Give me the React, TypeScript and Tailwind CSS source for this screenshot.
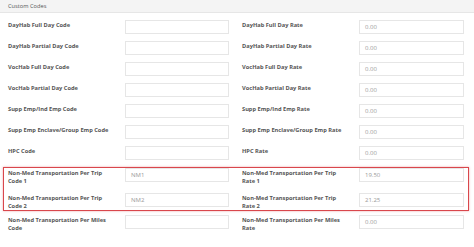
import React from "react";

type Row = { l: string; lv: string; r: string; rv: string; two?: boolean };

const rows: Row[] = [
  { l: "DayHab Full Day Code", lv: "", r: "DayHab Full Day Rate", rv: "0.00" },
  { l: "DayHab Partial Day Code", lv: "", r: "DayHab Partial Day Rate", rv: "0.00" },
  { l: "VocHab Full Day Code", lv: "", r: "VocHab Full Day Rate", rv: "0.00" },
  { l: "VocHab Partial Day Code", lv: "", r: "VocHab Partial Day Rate", rv: "0.00" },
  { l: "Supp Emp/Ind Emp Code", lv: "", r: "Supp Emp/Ind Emp Rate", rv: "0.00" },
  { l: "Supp Emp Enclave/Group Emp Code", lv: "", r: "Supp Emp Enclave/Group Emp Rate", rv: "0.00" },
  { l: "HPC Code", lv: "", r: "HPC Rate", rv: "0.00" },
];

const boxRows: Row[] = [
  { l: "Non-Med Transportation Per Trip Code 1", lv: "NM1", r: "Non-Med Transportation Per Trip Rate 1", rv: "19.50", two: true },
  { l: "Non-Med Transportation Per Trip Code 2", lv: "NM2", r: "Non-Med Transportation Per Trip Rate 2", rv: "21.25", two: true },
];

const lastRow: Row = { l: "Non-Med Transportation Per Miles Code", lv: "", r: "Non-Med Transportation Per Miles Rate", rv: "0.00", two: true };

function Input({ v, w }: { v: string; w: string }) {
  return (
    <div className={`${w} h-[14px] border border-[#e6e6e6] bg-white pl-[5px] text-[6px] leading-[12px] text-[#9a9a9a] shrink-0`}>
      {v}
    </div>
  );
}

function Label({ text }: { text: string }) {
  return (
    <div className="w-[117px] pr-[12px] font-bold text-[5.7px] text-[#555] leading-[8px] pt-[1px]">
      {text}
    </div>
  );
}

function FormRow({ row, mb }: { row: Row; mb: string }) {
  return (
    <div className={`flex ${mb}`}>
      <div className="w-[237px] pl-[8px] flex">
        <Label text={row.l} />
        <Input v={row.lv} w="w-[104px]" />
      </div>
      <div className="w-[237px] pl-[5px] flex">
        <Label text={row.r} />
        <Input v={row.rv} w="w-[105px]" />
      </div>
    </div>
  );
}

export default function App() {
  return (
    <div
      className="w-[474px] h-[247px] bg-white overflow-hidden"
      style={{ fontFamily: '"Open Sans", "Liberation Sans", sans-serif' }}
    >
      <div className="h-[13px] bg-[#f4f4f4] border-b border-[#e6e6e6] pl-[8px] text-[5.7px] leading-[12px] text-[#555]">
        Custom Codes
      </div>
      <div className="pt-[7px]">
        {rows.map((r) => (
          <FormRow key={r.l} row={r} mb="mb-[7px]" />
        ))}
        <div className="relative pt-[1px] pb-[4px]">
          <div className="absolute left-[3px] top-0 w-[466px] h-[44px] border-[1.5px] border-[#d9474c] shadow-[0_0_2px_rgba(217,71,76,0.5)]" />
          {boxRows.map((r, i) => (
            <FormRow key={r.l} row={r} mb={i === 0 ? "mb-[8px]" : "mb-0"} />
          ))}
        </div>
        <div className="pt-[1px]">
          <FormRow row={lastRow} mb="mb-0" />
        </div>
      </div>
    </div>
  );
}
